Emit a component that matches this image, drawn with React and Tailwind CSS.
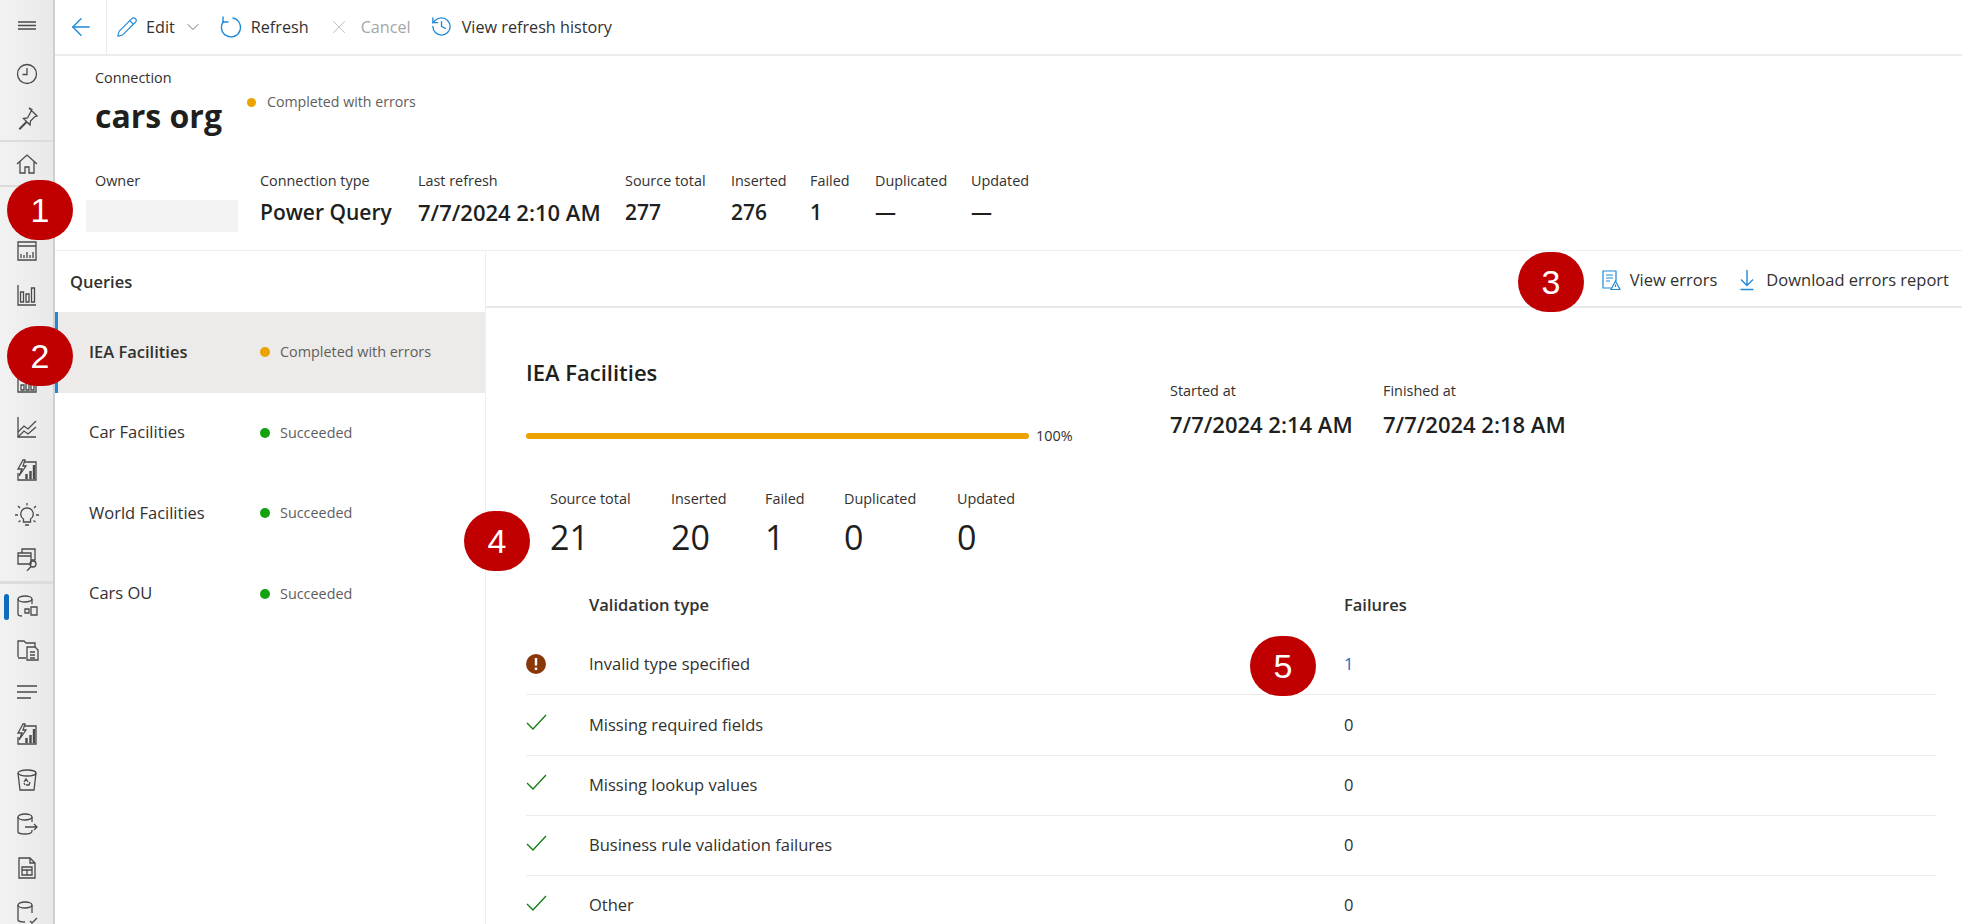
import { ArrowLeft, ChevronDown, History, Pencil, X } from "lucide-react";

const font = { fontFamily: "'Open Sans', 'Noto Sans', sans-serif" };

function NavIcon({ children }) {
  return (
    <svg width="24" height="24" viewBox="0 0 24 24" fill="none" stroke="#4a4a4a" strokeWidth="1.3">
      {children}
    </svg>
  );
}

const reportBolt = (
  <>
    <path d="M10 3h11v18H3V14" />
    <path d="M8 1L3 10h4l-3 7 7-10H8l2-6z" />
    <path d="M11.500 20v-5M15.500 20v-8M19 20V6" strokeWidth="2.400" />
  </>
);

const framedBars = (
  <>
    <path d="M3 3h18v18H3z" />
    <path d="M6 19v-5h3v5zM11 19V9h3v10zM16 19V6h3v13z" />
  </>
);

const topNav = [
  { h: 52, icon: <path d="M3 8h18M3 11.500h18M3 15h18" /> },
  { h: 44, icon: <><circle cx="12" cy="12" r="9.500" /><path d="M12 6v6.500H7.500" /></> },
  { h: 44, icon: <path d="M14 2l8 8-2 .5-4.500 4.500-.5 4-3-3-7 7-.5-.5 7-7-3-3 4-.5L17 3.500z" /> },
];

const midNav = [
  { h: 42, icon: null },
  { h: 44, icon: <><path d="M3 3h18v18H3zM3 7h18" /><path d="M6 19v-4M9 19v-3M12 19v-6M15 19v-3M18 19v-6" /></> },
  { h: 44, icon: <><path d="M3 2v20h18" /><path d="M5.500 19V9h3v10zM11 19V11h3v8zM16.500 19V5h3v14z" /></> },
  { h: 44, icon: null },
  { h: 44, icon: framedBars },
  { h: 44, icon: <><path d="M3 2v20h18" /><path d="M3 17l6-6 4 3 8-8M3 22l6-6 4 3 8-7" /></> },
  { h: 44, icon: reportBolt },
  { h: 44, icon: <><path d="M12 5a6 6 0 0 0-3.500 11v3h7v-3A6 6 0 0 0 12 5zM10 22h4" /><path d="M12 0v2.500M3 3l2 2M21 3l-2 2M0 12h3M21 12h3M3.500 19l2-1.500M20.500 19l-2-1.500" /></> },
  { h: 44, icon: <><path d="M7 6V2h13v11h-4M3 6h13v11H3zM3 9h13" /><circle cx="18" cy="17" r="3" /><path d="M16 19.500L12 24" /></> },
];

const lowerNav = [
  { h: 44, active: true, icon: <><path d="M3 5v15c0 1 1 2 4 2M17 5v5" /><ellipse cx="10" cy="5" rx="7" ry="3" /><path d="M10 15h4v4h-4zM16 13h6v8h-6z" /></> },
  { h: 44, icon: <><path d="M3 19V3h6l2 2h9v4M3 20h8" /><path d="M12 9h8l3 3v10H12zM15 14h5M15 17h5M15 20h5" /></> },
  { h: 40, icon: <path d="M2 6h20M2 12h20M2 18h14" /> },
  { h: 46, icon: reportBolt },
  { h: 44, icon: <><path d="M3 5l2 17h14l2-17" /><ellipse cx="12" cy="5" rx="9" ry="3" /><path d="M9 14l2-3 2 3M15 14l-1 3h-3M9 15l1 2" /></> },
  { h: 44, icon: <><path d="M3 5v15c0 1 3 2 7 2s7-1 7-3v-1M17 5v5" /><ellipse cx="10" cy="5" rx="7" ry="3" /><path d="M10 15h12M19 12l3 3-3 3" /></> },
  { h: 44, icon: <><path d="M4 2h11l5 5v15H4zM15 2v5h5" /><path d="M7 11h10v8H7zM7 14h10M12 14v5" /></> },
  { h: 44, icon: <><path d="M3 5v15c0 1 3 2 7 2M17 5v8" /><ellipse cx="10" cy="5" rx="7" ry="3" /><path d="M15 21l2 2 5-5" /></> },
];

const queries = [
  { name: "IEA Facilities", status: "Completed with errors", dot: "bg-[#eaa300]", selected: true },
  { name: "Car Facilities", status: "Succeeded", dot: "bg-[#13a10e]" },
  { name: "World Facilities", status: "Succeeded", dot: "bg-[#13a10e]" },
  { name: "Cars OU", status: "Succeeded", dot: "bg-[#13a10e]" },
];

const topStats = [
  { label: "Connection type", value: "Power Query", w: "w-[158px]" },
  { label: "Last refresh", value: "7/7/2024 2:10 AM", w: "w-[207px]", date: true },
  { label: "Source total", value: "277", w: "w-[106px]" },
  { label: "Inserted", value: "276", w: "w-[79px]" },
  { label: "Failed", value: "1", w: "w-[65px]" },
  { label: "Duplicated", value: "—", w: "w-[96px]" },
  { label: "Updated", value: "—", w: "w-[90px]" },
];

const runStats = [
  { label: "Source total", value: "21", w: "w-[121px]" },
  { label: "Inserted", value: "20", w: "w-[94px]" },
  { label: "Failed", value: "1", w: "w-[79px]" },
  { label: "Duplicated", value: "0", w: "w-[113px]" },
  { label: "Updated", value: "0", w: "w-[90px]" },
];

const validations = [
  { name: "Invalid type specified", count: "1", error: true },
  { name: "Missing required fields", count: "0" },
  { name: "Missing lookup values", count: "0" },
  { name: "Business rule validation failures", count: "0" },
  { name: "Other", count: "0" },
];

function Badge({ n, className }) {
  return (
    <div
      className={`absolute z-10 flex h-[60px] w-[66px] items-center justify-center rounded-full bg-[#c00000] text-[34px] text-white ${className}`}
      style={{ fontFamily: "'Liberation Sans', sans-serif" }}
    >
      {n}
    </div>
  );
}

function Sidebar() {
  const row = (item, i) => (
    <div key={i} className="relative flex items-center justify-center" style={{ height: item.h }}>
      {item.active && <span className="absolute left-[4px] top-[10px] h-[26px] w-[5px] rounded bg-[#0f6cbd]" />}
      {item.icon && <span className="ml-[1px] flex"><NavIcon>{item.icon}</NavIcon></span>}
    </div>
  );
  return (
    <aside className="flex w-[55px] shrink-0 flex-col overflow-hidden border-r-[2px] border-[#cfcfcf] bg-gradient-to-r from-[#f2f2f2] to-[#e9e9e9]">
      <div className="shrink-0 border-b-2 border-[#dcdcdc]">{topNav.map(row)}</div>
      <div className="flex h-[45px] shrink-0 items-center justify-center border-b-2 border-[#dcdcdc]">
        <NavIcon><path d="M2 12L12 3l10 9M5 10v11h5v-6h4v6h5V10" /></NavIcon>
      </div>
      <div className="shrink-0 border-b-[3px] border-[#dcdcdc]">{midNav.map(row)}</div>
      <div className="shrink-0">{lowerNav.map(row)}</div>
    </aside>
  );
}

export default function App() {
  return (
    <div className="relative flex h-[924px] w-[1962px] overflow-hidden bg-white text-[#323130]" style={font}>
      <Sidebar />
      <main className="flex min-w-0 flex-1 flex-col">
        <div className="flex h-[56px] shrink-0 items-center border-b-2 border-[#ececec] text-[16.200px]">
          <div className="flex h-full w-[52px] items-center justify-center border-r border-[#ececec]">
            <ArrowLeft size={28} strokeWidth={1.200} className="text-[#1f8ad6]" />
          </div>
          <div className="ml-[9px] flex items-center gap-[8px]">
            <Pencil size={22} strokeWidth={1.200} className="text-[#1f8ad6]" />
            <span>Edit</span>
            <ChevronDown size={20} strokeWidth={1} className="text-[#555]" />
          </div>
          <div className="ml-[15px] flex items-center gap-[9px]">
            <svg width="24" height="24" viewBox="0 0 24 24" fill="none" stroke="#1f8ad6" strokeWidth="1.400">
              <path d="M14.500 3a9.500 9.500 0 1 1-9 3.500" />
              <path d="M5 1.500v5.500h5.500" />
            </svg>
            <span>Refresh</span>
          </div>
          <div className="ml-[19px] flex items-center gap-[11px] text-[#a6a6a6]">
            <X size={22} strokeWidth={1} className="text-[#bbb]" />
            <span>Cancel</span>
          </div>
          <div className="ml-[19px] flex items-center gap-[9px]">
            <History size={23} strokeWidth={1.400} className="text-[#1f8ad6]" />
            <span>View refresh history</span>
          </div>
        </div>

        <section className="h-[195px] shrink-0 border-b border-[#eeeeee] pl-[40px] pt-[12px]">
          <div className="text-[14.400px] leading-[20px]">Connection</div>
          <div className="flex items-start">
            <h1 className="mt-[4px] text-[32px] font-bold leading-[48px] text-[#201f1e]">cars org</h1>
            <div className="ml-[25px] mt-[4px] flex items-center gap-[11px] text-[14.200px] leading-[20px] text-[#605e5c]">
              <span className="h-[9px] w-[9px] rounded-full bg-[#eaa300]" />
              Completed with errors
            </div>
          </div>
          <div className="mt-[31px] flex">
            <div className="w-[165px]">
              <div className="text-[14.400px] leading-[20px]">Owner</div>
              <div className="-ml-[9px] mt-[9px] h-[32px] w-[152px] bg-[#f3f3f3]" />
            </div>
            {topStats.map((s) => (
              <div key={s.label} className={s.w}>
                <div className="text-[14.400px] leading-[20px]">{s.label}</div>
                <div className={`mt-[5px] font-semibold leading-[32px] text-[#201f1e] ${s.date ? "text-[22px]" : "text-[21px]"}`}>{s.value}</div>
              </div>
            ))}
          </div>
        </section>

        <div className="flex min-h-0 flex-1">
          <nav className="w-[431px] shrink-0 border-r border-[#eeeeee]">
            <h2 className="flex h-[61px] items-center pl-[15px] pt-[2px] text-[16.500px] font-semibold">Queries</h2>
            {queries.map((q) => (
              <div
                key={q.name}
                className={`flex h-[80.500px] items-center border-l-[3px] pl-[31px] ${q.selected ? "border-[#1f8ad6] bg-[#edebe9]" : "border-transparent"}`}
              >
                <span className={`w-[171px] text-[16.500px] ${q.selected ? "font-semibold" : ""}`}>{q.name}</span>
                <span className={`h-[10px] w-[10px] rounded-full ${q.dot}`} />
                <span className="ml-[10px] text-[14.400px] text-[#605e5c]">{q.status}</span>
              </div>
            ))}
          </nav>

          <div className="min-w-0 flex-1">
            <div className="flex h-[57px] items-center justify-end gap-[20px] border-b-2 border-[#e8e8e8] pr-[13px] pt-[3px] text-[16.500px]">
              <div className="flex items-center gap-[9px]">
                <svg width="20" height="22" viewBox="0 0 20 22" fill="none" stroke="#1f8ad6" strokeWidth="1.200">
                  <path d="M10 19H2V2h13v10M5 6h7M5 9h7M5 12h4" />
                  <path d="M14.500 12l4.500 8.500h-9z" />
                  <path d="M14.500 15.500v2.500" />
                </svg>
                <span>View errors</span>
              </div>
              <div className="flex items-center gap-[9px]">
                <svg width="20" height="22" viewBox="0 0 20 22" fill="none" stroke="#1f8ad6" strokeWidth="1.400">
                  <path d="M10 1v15M4 10.500l6 6 6-6M3.500 20.500h13" />
                </svg>
                <span>Download errors report</span>
              </div>
            </div>

            <div className="pl-[40px] pr-[26px]">
              <div className="flex h-[141px]">
                <div className="w-[644px] pt-[49px]">
                  <h2 className="text-[22px] font-semibold leading-[30px] text-[#201f1e]">IEA Facilities</h2>
                  <div className="mt-[39px] flex items-center gap-[7px]">
                    <div className="h-[6px] w-[503px] rounded-full bg-[#eaa300]" />
                    <span className="text-[14.400px] leading-[20px]">100%</span>
                  </div>
                </div>
                <div className="w-[213px] pt-[73px]">
                  <div className="text-[14.400px] leading-[20px]">Started at</div>
                  <div className="mt-[8px] text-[22px] font-semibold leading-[30px] text-[#201f1e]">7/7/2024 2:14 AM</div>
                </div>
                <div className="pt-[73px]">
                  <div className="text-[14.400px] leading-[20px]">Finished at</div>
                  <div className="mt-[8px] text-[22px] font-semibold leading-[30px] text-[#201f1e]">7/7/2024 2:18 AM</div>
                </div>
              </div>

              <div className="ml-[24px] mt-[40px] flex">
                {runStats.map((s) => (
                  <div key={s.label} className={s.w}>
                    <div className="text-[14.400px] leading-[20px]">{s.label}</div>
                    <div className="mt-[6px] text-[34px] leading-[44px] text-[#201f1e]">{s.value}</div>
                  </div>
                ))}
              </div>

              <div className="mt-[16px] flex h-[60px] items-center text-[16.500px] font-semibold">
                <span className="ml-[63px] w-[755px]">Validation type</span>
                <span>Failures</span>
              </div>
              {validations.map((v) => (
                <div key={v.name} className="flex h-[60.300px] items-center border-b border-[#ececec] text-[16.500px]">
                  <span className="flex w-[63px] items-center">
                    {v.error ? (
                      <svg width="20" height="20" viewBox="0 0 20 20" className="-mt-[2px]">
                        <circle cx="10" cy="10" r="10" fill="#8a3707" />
                        <path d="M10 4v7.500M10 13.500v2.500" stroke="#fff" strokeWidth="2.400" />
                      </svg>
                    ) : (
                      <svg width="22" height="18" viewBox="0 0 22 18" fill="none" stroke="#107c10" strokeWidth="1.300" className="-mt-[6px]">
                        <path d="M1 10l6 6L20 2" />
                      </svg>
                    )}
                  </span>
                  <span className="w-[755px]">{v.name}</span>
                  <span className={v.error ? "text-[#106ebe]" : ""}>{v.count}</span>
                </div>
              ))}
            </div>
          </div>
        </div>
      </main>

      <Badge n="1" className="left-[7px] top-[180px]" />
      <Badge n="2" className="left-[7px] top-[326px]" />
      <Badge n="3" className="left-[1518px] top-[252px]" />
      <Badge n="4" className="left-[464px] top-[511px]" />
      <Badge n="5" className="left-[1250px] top-[636px]" />
    </div>
  );
}
